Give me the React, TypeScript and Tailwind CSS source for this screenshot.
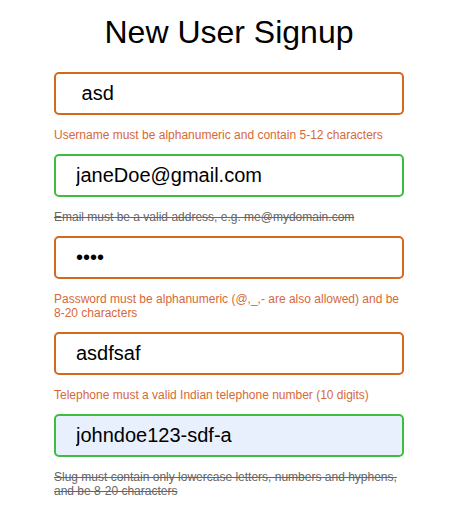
import React from "react";

type Field = {
  type: string;
  value: string;
  valid: boolean;
  msg: string;
  autofill?: boolean;
};

const fields: Field[] = [
  { type: "text", value: " asd", valid: false, msg: "Username must be alphanumeric and contain 5-12 characters" },
  { type: "email", value: "janeDoe@gmail.com", valid: true, msg: "Email must be a valid address, e.g. me@mydomain.com" },
  { type: "password", value: "abcd", valid: false, msg: "Password must be alphanumeric (@,_,- are also allowed) and be 8-20 characters" },
  { type: "text", value: "asdfsaf", valid: false, msg: "Telephone must a valid Indian telephone number (10 digits)" },
  { type: "text", value: "johndoe123-sdf-a", valid: true, autofill: true, msg: "Slug must contain only lowercase letters, numbers and hyphens, and be 8-20 characters" },
];

export default function App() {
  return (
    <div className="w-[458px] h-[526px] bg-white flex flex-col items-center font-['Liberation_Sans',Arial,sans-serif]">
      <h1 className="mt-[14px] text-[32px] leading-[37px] text-black font-normal">New User Signup</h1>
      <form className="w-[350px] mt-[21px] flex flex-col">
        {fields.map((f, i) => (
          <div key={i} className={i === 0 ? "" : "mt-[12px]"}>
            <input
              type={f.type}
              defaultValue={f.value}
              readOnly
              className={
                f.valid
                  ? f.autofill
                    ? "block w-full h-[43px] border-2 border-[#3dbf3d] rounded-[5px] pl-[20px] text-[20px] text-black bg-[#e8f0fe] outline-none font-['Liberation_Sans',Arial,sans-serif]"
                    : "block w-full h-[43px] border-2 border-[#3dbf3d] rounded-[5px] pl-[20px] text-[20px] text-black bg-white outline-none font-['Liberation_Sans',Arial,sans-serif]"
                  : "block w-full h-[43px] border-2 border-[#d2691e] rounded-[5px] pl-[20px] text-[20px] text-black bg-white outline-none font-['Liberation_Sans',Arial,sans-serif]"
              }
            />
            <p
              className={
                f.valid
                  ? "mt-[13px] text-[12px] leading-[14px] text-[#666] line-through"
                  : "mt-[13px] text-[12px] leading-[14px] text-[#d6693a]"
              }
            >
              {f.msg}
            </p>
          </div>
        ))}
      </form>
    </div>
  );
}
